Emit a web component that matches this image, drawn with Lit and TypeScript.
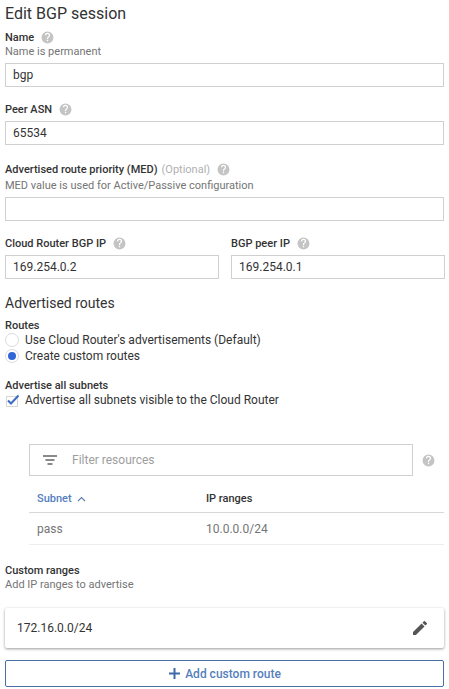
import { LitElement, html, css } from "lit";
import { customElement } from "lit/decorators.js";

const help = html`<svg class="help" viewBox="0 0 24 24" width="13" height="13"><path fill="#c4c4c4" d="M12 1a11 11 0 1 0 0 22 11 11 0 0 0 0-22zm1.2 18h-2.4v-2.4h2.4V19zm2.5-8.5-1.1 1.1c-.9.9-1.4 1.6-1.4 3.4h-2.4v-.6c0-1.3.5-2.5 1.4-3.4l1.5-1.5c.4-.4.7-1 .7-1.7a2.4 2.4 0 0 0-4.8 0H7.2a4.8 4.8 0 0 1 9.6 0c0 1.1-.4 2-1.1 2.7z"/></svg>`;

@customElement("app-root")
export class AppRoot extends LitElement {
  static styles = css`
    :host { display: block; width: 449px; height: 689px; overflow: hidden; background: #fff; font-family: Roboto, "Liberation Sans", sans-serif; color: #212121; font-size: 12px; }
    .page { padding: 0 5px; display: flex; flex-direction: column; }
    h1 { margin: 3px 0 -1px; font-size: 16px; font-weight: 400; line-height: 22px; color: #333; }
    h2 { margin: 14px 0 0; font-size: 14px; font-weight: 400; line-height: 20px; color: #333; }
    .label { box-sizing: border-box; height: 14px; padding-top: 1px; font-size: 11px; font-weight: 500; line-height: 13px; color: #333; display: flex; align-items: center; }
    .help { margin-left: 7px; flex: none; }
    .opt { font-weight: 400; color: #b0b0b0; margin-left: 4px; }
    .hint { box-sizing: border-box; height: 14px; padding-top: 1px; font-size: 11px; line-height: 13px; color: #757575; }
    .input { box-sizing: border-box; height: 24px; border: 1px solid #d0d0d0; padding: 0 7px; line-height: 22px; font-size: 12px; color: #333; margin-top: 5px; }
    .name { margin-top: 6px; }
    .asn { margin-top: 15px; }
    .med { margin-top: 17px; }
    .med-hint { margin-top: 2px; }
    .ips { margin-top: 15px; display: grid; grid-template-columns: 214px 214px; gap: 12px; }
    .routes { margin-top: 5px; }
    .opt-row { display: flex; align-items: center; gap: 6px; height: 16px; font-size: 12px; line-height: 16px; color: #333; }
    .radio { box-sizing: border-box; width: 14px; height: 14px; border-radius: 50%; border: 1px solid #dcdcdc; display: flex; align-items: center; justify-content: center; flex: none; }
    .dot { width: 8px; height: 8px; border-radius: 50%; background: #3367d6; }
    .subs { margin-top: 14px; }
    .check { width: 14px; height: 14px; flex: none; }
    .filter-wrap { margin: 36px 0 0 24px; display: flex; align-items: center; gap: 9px; }
    .filter-wrap .help { margin-left: 0; }
    .filter { box-sizing: border-box; width: 384px; height: 32px; border: 1px solid #cfcfcf; display: flex; align-items: center; padding-left: 13px; gap: 15px; color: #9e9e9e; font-size: 12px; }
    .table { margin: 10px 0 0 24px; }
    .tr { box-sizing: border-box; display: grid; grid-template-columns: 169px 1fr; padding-left: 8px; }
    .th { height: 27px; padding-bottom: 1px; align-items: start; border-bottom: 1px solid #d8d8d8; font-size: 11px; font-weight: 500; line-height: 14px; color: #333; padding-top: 6px; }
    .sub { color: #5580bd; display: flex; align-items: center; gap: 5px; }
    .td { height: 32px; align-items: center; border-bottom: 1px solid #eee; font-size: 12px; color: #757575; }
    .custom { margin-top: 18px; }
    .card { margin-top: 17px; height: 40px; box-sizing: border-box; display: flex; align-items: center; justify-content: space-between; padding: 0 17px 0 12px; background: #fff; border-radius: 2px; box-shadow: 0 1px 3px rgba(0,0,0,.4); font-size: 12px; color: #333; }
    .add { box-sizing: border-box; margin-top: 12px; height: 27px; border: 1px solid #4a6fa5; border-radius: 2px; display: flex; align-items: center; justify-content: center; gap: 4px; color: #5580bd; font-size: 12px; font-weight: 500; }
  `;

  render() {
    return html`<div class="page">
      <h1>Edit BGP session</h1>
      <div class="label name">Name ${help}</div>
      <div class="hint">Name is permanent</div>
      <div class="input">bgp</div>
      <div class="label asn">Peer ASN ${help}</div>
      <div class="input">65534</div>
      <div class="label med">Advertised route priority (MED)<span class="opt">(Optional)</span> ${help}</div>
      <div class="hint med-hint">MED value is used for Active/Passive configuration</div>
      <div class="input"></div>
      <div class="ips">
        <div><div class="label">Cloud Router BGP IP ${help}</div><div class="input">169.254.0.2</div></div>
        <div><div class="label">BGP peer IP ${help}</div><div class="input">169.254.0.1</div></div>
      </div>
      <h2>Advertised routes</h2>
      <div class="label routes">Routes</div>
      <div class="opt-row"><span class="radio"></span>Use Cloud Router's advertisements (Default)</div>
      <div class="opt-row"><span class="radio"><span class="dot"></span></span>Create custom routes</div>
      <div class="label subs">Advertise all subnets</div>
      <div class="opt-row">
        <svg class="check" viewBox="0 0 14 14"><path d="M1.5 3.5h11v10h-11z" fill="none" stroke="#d4d4d4"/><path d="M3 7.5l3 3L13.5 2.5" fill="none" stroke="#3d6cc4" stroke-width="2"/></svg>
        Advertise all subnets visible to the Cloud Router
      </div>
      <div class="filter-wrap">
        <div class="filter">
          <svg width="14" height="10" viewBox="0 0 14 10"><path d="M0 1h14M2.5 5h9M4.5 9h5" stroke="#8a8a8a" stroke-width="2"/></svg>
          Filter resources
        </div>
        ${help}
      </div>
      <div class="table">
        <div class="tr th"><span class="sub">Subnet <svg width="9" height="6" viewBox="0 0 9 6"><path d="M1 5l3.5-3.5L8 5" fill="none" stroke="#5b7fb5" stroke-width="1.1"/></svg></span><span>IP ranges</span></div>
        <div class="tr td"><span>pass</span><span>10.0.0.0/24</span></div>
      </div>
      <div class="label custom">Custom ranges</div>
      <div class="hint">Add IP ranges to advertise</div>
      <div class="card">172.16.0.0/24
        <svg width="14" height="14" viewBox="3 3 18 18"><path fill="#555" d="M3 17.25V21h3.75L17.81 9.94l-3.75-3.75L3 17.25zM20.71 7.04a1 1 0 0 0 0-1.41l-2.34-2.34a1 1 0 0 0-1.41 0l-1.83 1.83 3.75 3.75 1.83-1.83z"/></svg>
      </div>
      <div class="add"><svg width="13" height="13" viewBox="0 0 13 13"><path d="M6.5 1v11M1 6.5h11" stroke="#3f6aa8" stroke-width="2"/></svg>Add custom route</div>
    </div>`;
  }
}
